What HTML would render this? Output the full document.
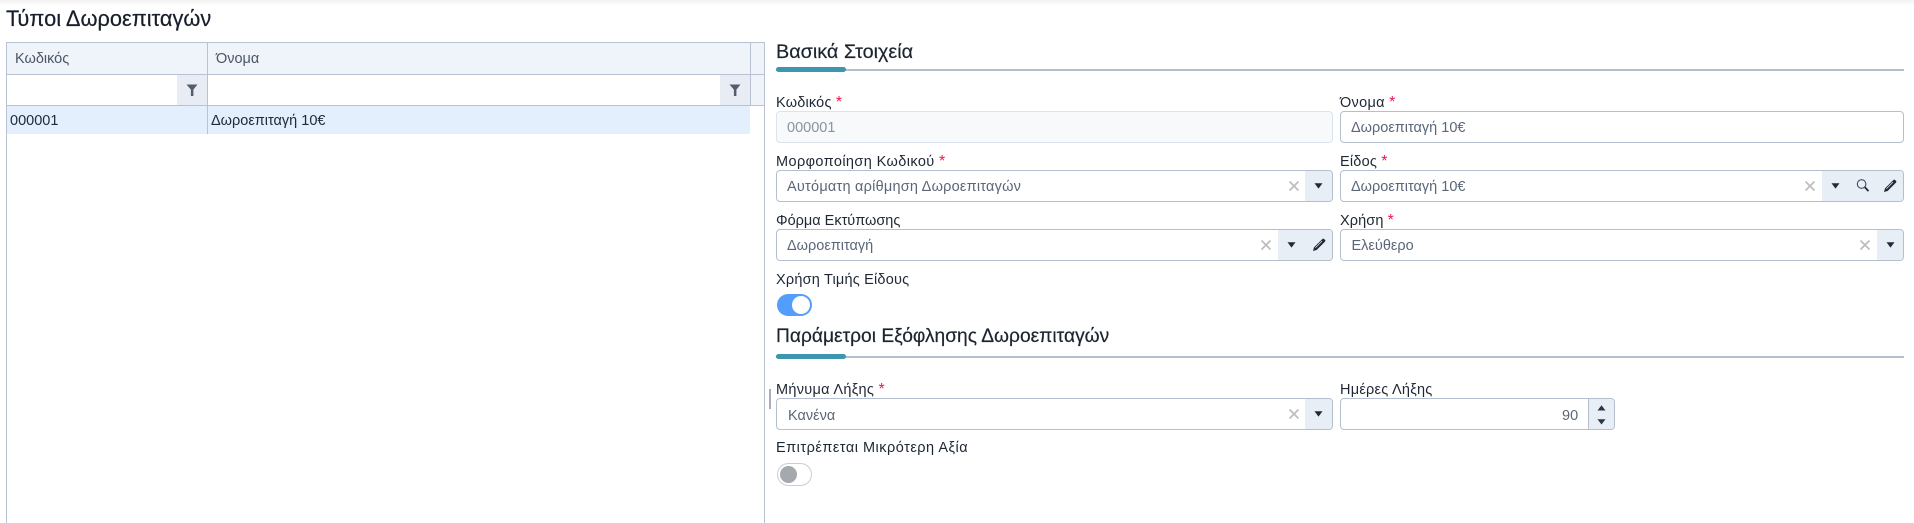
<!DOCTYPE html>
<html lang="el">
<head>
<meta charset="utf-8">
<title>Τύποι Δωροεπιταγών</title>
<style>
html,body{margin:0;padding:0;background:#fff}
body{position:relative;width:1914px;height:523px;overflow:hidden;font-family:"Liberation Sans","Noto Sans CJK JP",sans-serif;color:#1f2937;font-size:14.5px}
div,svg{position:absolute}
.t{white-space:nowrap;line-height:20px;margin-top:1px}
.lab{font-size:14.5px;color:#1e2733;white-space:nowrap;line-height:20px;margin-top:1px}
.lab b{font-weight:400;color:#f0144f;font-size:16px}
.inp{box-sizing:border-box;border:1px solid #b4bfce;border-radius:4px;background:#fff;height:33px}
.val{font-size:14.5px;color:#5b6778;white-space:nowrap;line-height:20px;margin-top:1px}
.btn{background:#e8eef6;border-radius:0 3px 3px 0}
.h{font-size:19.2px;color:#1c2430;white-space:nowrap;line-height:24px;margin-top:2px;-webkit-text-stroke:.2px #1c2430}
.ln{height:2px;background:#b5bfcc;left:776px;width:1128px}
.tl{height:5px;background:#3c96ad;left:776px;width:70px;border-radius:3px}
.b{background:#b8c2d3}
</style>
</head>
<body>
<div style="left:0;top:0;width:1914px;height:6px;background:linear-gradient(#f2f2f2,#fff)"></div>
<div class="t" style="left:6px;top:4.5px;font-size:21.8px;line-height:26px;color:#161e2a;-webkit-text-stroke:.2px #161e2a">Τύποι Δωροεπιταγών</div>

<!-- grid -->
<div style="left:7px;top:43px;width:757px;height:31px;background:#eff3fa"></div>
<div class="b" style="left:6px;top:42px;width:759px;height:1px"></div>
<div class="b" style="left:6px;top:74px;width:759px;height:1px"></div>
<div class="b" style="left:6px;top:105px;width:759px;height:1px"></div>
<div class="b" style="left:6px;top:42px;width:1px;height:481px"></div>
<div class="b" style="left:764px;top:42px;width:1px;height:481px"></div>
<div style="left:751px;top:75px;width:13px;height:30px;background:#eff3fa"></div>
<div class="b" style="left:750px;top:42px;width:1px;height:64px"></div>
<div style="left:7px;top:106px;width:743px;height:28px;background:#e3effd"></div>
<div class="b" style="left:207px;top:42px;width:1px;height:92px"></div>
<div style="left:177px;top:75px;width:30px;height:30px;background:#e8edf5"></div>
<div style="left:720px;top:75px;width:30px;height:30px;background:#e8edf5"></div>
<svg style="left:186px;top:84px" width="12" height="13" viewBox="0 0 12 13"><path d="M.5 .5h11L7.4 5.6V12H4.9V5.6z" fill="#555c6c"/></svg>
<svg style="left:729px;top:84px" width="12" height="13" viewBox="0 0 12 13"><path d="M.5 .5h11L7.4 5.6V12H4.9V5.6z" fill="#555c6c"/></svg>
<div class="t" style="left:15px;top:48px;color:#4a5565">Κωδικός</div>
<div class="t" style="left:216px;top:48px;color:#4a5565">Όνομα</div>
<div class="t" style="left:10px;top:110px;color:#222b38">000001</div>
<div class="t" style="left:211px;top:110px;color:#222b38">Δωροεπιταγή 10€</div>

<!-- section 1 -->
<div class="h" style="left:776px;top:38px;font-size:19.8px">Βασικά Στοιχεία</div>
<div class="ln" style="top:69px"></div>
<div class="tl" style="top:67px"></div>

<div class="lab" style="left:776px;top:92px;letter-spacing:.2px">Κωδικός <b>*</b></div>
<div class="inp" style="left:776px;top:111px;width:557px;height:32px;background:#f7f9fb;border-color:#dde3ec"></div>
<div class="val" style="left:787px;top:117px;color:#8a93a1">000001</div>

<div class="lab" style="left:1340px;top:92px;letter-spacing:.3px">Όνομα <b>*</b></div>
<div class="inp" style="left:1340px;top:111px;width:564px;height:32px"></div>
<div class="val" style="left:1351px;top:117px">Δωροεπιταγή 10€</div>

<div class="lab" style="left:776px;top:151px;letter-spacing:.4px">Μορφοποίηση Κωδικού <b>*</b></div>
<div class="inp" style="left:776px;top:170px;width:557px;height:32px"></div>
<div class="btn" style="left:1305px;top:171px;width:27px;height:30px"></div>
<div class="val" style="left:787px;top:176px;letter-spacing:.23px">Αυτόματη αρίθμηση Δωροεπιταγών</div>
<svg style="left:1288px;top:180px" width="12" height="12" viewBox="0 0 12 12"><path d="M1.5 1.5l9 9M10.5 1.5l-9 9" stroke="#bdbdbd" stroke-width="1.7"/></svg>
<svg style="left:1314px;top:183px" width="9" height="6" viewBox="0 0 9 6"><path d="M.5.2h8L4.5 5.6z" fill="#1f2a3a"/></svg>

<div class="lab" style="left:1340px;top:151px;letter-spacing:.2px">Είδος <b>*</b></div>
<div class="inp" style="left:1340px;top:170px;width:564px;height:32px"></div>
<div class="btn" style="left:1822px;top:171px;width:81px;height:30px"></div>
<div class="val" style="left:1351px;top:176px">Δωροεπιταγή 10€</div>
<svg style="left:1804px;top:180px" width="12" height="12" viewBox="0 0 12 12"><path d="M1.5 1.5l9 9M10.5 1.5l-9 9" stroke="#bdbdbd" stroke-width="1.7"/></svg>
<svg style="left:1831px;top:183px" width="9" height="6" viewBox="0 0 9 6"><path d="M.5.2h8L4.5 5.6z" fill="#1f2a3a"/></svg>
<svg style="left:1856px;top:179px" width="14" height="14" viewBox="0 0 14 14"><circle cx="5.6" cy="5" r="4.3" fill="none" stroke="#3f4c5e" stroke-width="1.1"/><path d="M8.9 8.3l3.6 3.8" stroke="#1f2a3a" stroke-width="1.8"/></svg>
<svg style="left:1883px;top:179px" width="14" height="14" viewBox="0 0 14 14"><path d="M1 13l1-3.6L10.4 1c.6-.5 1.2-.5 1.7 0l.9.9c.5.5.5 1.1 0 1.7L4.6 12z" fill="#1f2a3a"/><path d="M3.4 9.7L10 3.1" stroke="#e8eef6" stroke-width=".7"/></svg>

<div class="lab" style="left:776px;top:210px">Φόρμα Εκτύπωσης</div>
<div class="inp" style="left:776px;top:229px;width:557px;height:32px"></div>
<div class="btn" style="left:1278px;top:230px;width:54px;height:30px"></div>
<div class="val" style="left:787px;top:235px">Δωροεπιταγή</div>
<svg style="left:1260px;top:239px" width="12" height="12" viewBox="0 0 12 12"><path d="M1.5 1.5l9 9M10.5 1.5l-9 9" stroke="#bdbdbd" stroke-width="1.7"/></svg>
<svg style="left:1287px;top:242px" width="9" height="6" viewBox="0 0 9 6"><path d="M.5.2h8L4.5 5.6z" fill="#1f2a3a"/></svg>
<svg style="left:1312px;top:238px" width="14" height="14" viewBox="0 0 14 14"><path d="M1 13l1-3.6L10.4 1c.6-.5 1.2-.5 1.7 0l.9.9c.5.5.5 1.1 0 1.7L4.6 12z" fill="#1f2a3a"/><path d="M3.4 9.7L10 3.1" stroke="#e8eef6" stroke-width=".7"/></svg>

<div class="lab" style="left:1340px;top:210px;letter-spacing:.1px">Χρήση <b>*</b></div>
<div class="inp" style="left:1340px;top:229px;width:564px;height:32px"></div>
<div class="btn" style="left:1877px;top:230px;width:26px;height:30px"></div>
<div class="val" style="left:1351.5px;top:235px">Ελεύθερο</div>
<svg style="left:1859px;top:239px" width="12" height="12" viewBox="0 0 12 12"><path d="M1.5 1.5l9 9M10.5 1.5l-9 9" stroke="#bdbdbd" stroke-width="1.7"/></svg>
<svg style="left:1886px;top:242px" width="9" height="6" viewBox="0 0 9 6"><path d="M.5.2h8L4.5 5.6z" fill="#1f2a3a"/></svg>

<div class="lab" style="left:776px;top:269px;letter-spacing:.2px">Χρήση Τιμής Είδους</div>
<div style="left:777px;top:294px;width:35px;height:22px;border-radius:11px;background:#539dff"></div>
<div style="left:792px;top:296px;width:18px;height:18px;border-radius:50%;background:#fff"></div>

<!-- section 2 -->
<div class="h" style="left:776px;top:323px">Παράμετροι Εξόφλησης Δωροεπιταγών</div>
<div class="ln" style="top:356px"></div>
<div class="tl" style="top:354px"></div>

<div style="left:769px;top:389px;width:2px;height:20px;background:#a7afbf"></div>
<div class="lab" style="left:776px;top:379px;letter-spacing:.3px">Μήνυμα Λήξης <b>*</b></div>
<div class="inp" style="left:776px;top:398px;width:557px;height:32px"></div>
<div class="btn" style="left:1305px;top:399px;width:27px;height:30px"></div>
<div class="val" style="left:788px;top:405px">Κανένα</div>
<svg style="left:1288px;top:408px" width="12" height="12" viewBox="0 0 12 12"><path d="M1.5 1.5l9 9M10.5 1.5l-9 9" stroke="#bdbdbd" stroke-width="1.7"/></svg>
<svg style="left:1314px;top:411px" width="9" height="6" viewBox="0 0 9 6"><path d="M.5.2h8L4.5 5.6z" fill="#1f2a3a"/></svg>

<div class="lab" style="left:1340px;top:379px;letter-spacing:.25px">Ημέρες Λήξης</div>
<div class="inp" style="left:1340px;top:398px;width:275px;height:32px"></div>
<div class="btn" style="left:1589px;top:399px;width:25px;height:30px"></div>
<div style="left:1588px;top:399px;width:1px;height:30px;background:#b4bfce"></div>
<div class="val" style="left:1562px;top:405px">90</div>
<svg style="left:1597px;top:405px" width="9" height="6" viewBox="0 0 9 6"><path d="M.5 5.5h8L4.5.2z" fill="#2a3646"/></svg>
<svg style="left:1597px;top:419px" width="9" height="6" viewBox="0 0 9 6"><path d="M.5.2h8L4.5 5.5z" fill="#2a3646"/></svg>

<div class="lab" style="left:776px;top:437px;letter-spacing:.5px">Επιτρέπεται Μικρότερη Αξία</div>
<div style="box-sizing:border-box;left:777px;top:463px;width:35px;height:23px;border-radius:12px;background:#fff;border:1px solid #c9ced6"></div>
<div style="left:780px;top:466px;width:17px;height:17px;border-radius:50%;background:#a5a8ad"></div>
</body>
</html>
